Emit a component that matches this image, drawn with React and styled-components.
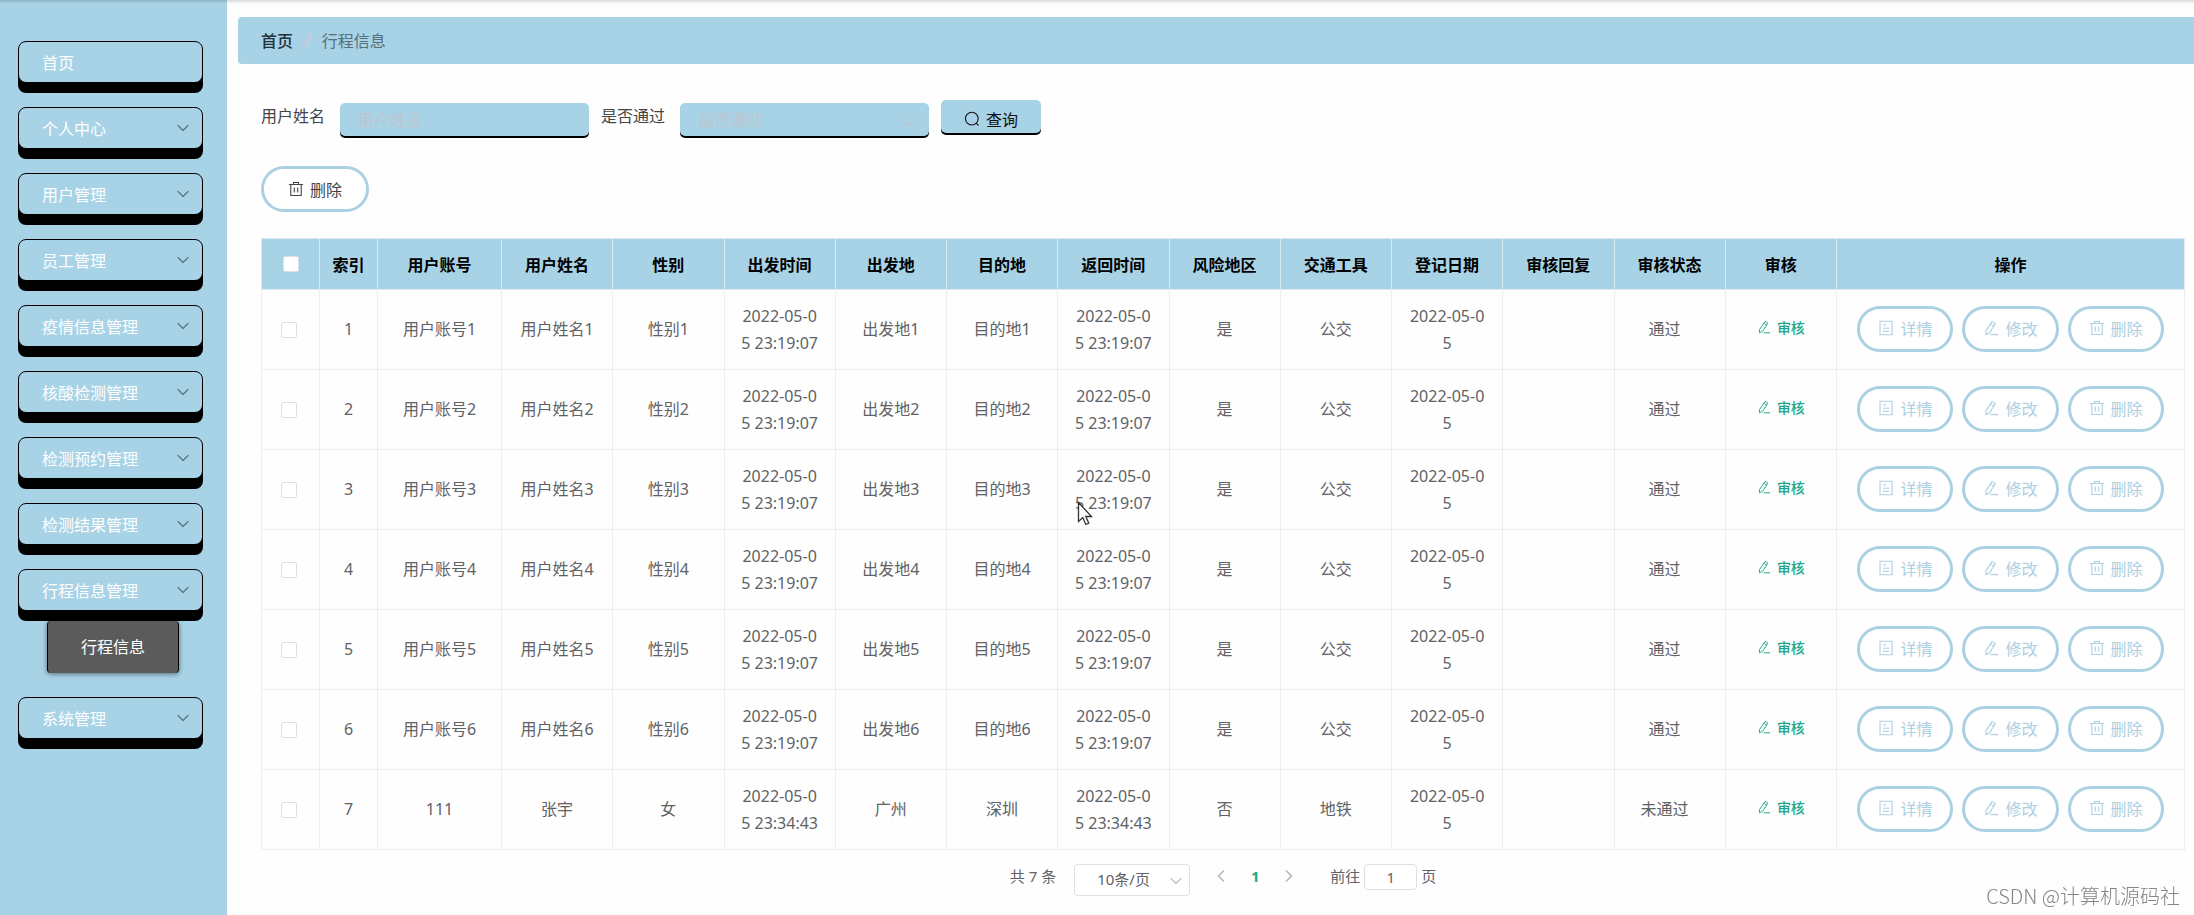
import React, { useState } from "react";
import styled, { createGlobalStyle } from "styled-components";
import { ChevronDown, ChevronLeft, ChevronRight } from "lucide-react";

const blue = "#a8d3e6";
const ring = "#abd0e1";
const line = "#ededf0";

const GlobalStyle = createGlobalStyle`
  * {
    box-sizing: border-box;
  }

  body {
    margin: 0;
    background: #fefefe;
    color: #606266;
    font-family: "Noto Sans", "Noto Sans CJK SC", sans-serif;
    font-size: 16px;
  }

  button,
  input,
  select {
    font-family: inherit;
    font-size: inherit;
  }
`;

const Shell = styled.div`
  display: flex;
  min-height: 100vh;
`;

const TopShade = styled.div`
  position: fixed;
  top: 0;
  left: 0;
  right: 0;
  height: 4px;
  background: linear-gradient(rgba(0, 0, 0, 0.14), rgba(0, 0, 0, 0));
`;

const Sidebar = styled.nav`
  flex: 0 0 227px;
  padding: 41px 24px 24px 18px;
  background: ${blue};
`;

const MenuGroup = styled.div`
  margin-bottom: 24px;
`;

const MenuButton = styled.button`
  display: flex;
  align-items: center;
  justify-content: space-between;
  width: 100%;
  height: 42px;
  padding: 0 9px 0 23px;
  color: #fff;
  background: ${blue};
  border: 1px solid #000;
  border-radius: 8px;
  box-shadow: 0 10px 0 #000;
  cursor: pointer;

  svg {
    color: #55788a;
  }
`;

const SubLink = styled.a`
  display: block;
  margin: 10px 24px 0 29px;
  line-height: 52px;
  text-align: center;
  color: #fff;
  background: #5b5b5b;
  border: solid #000;
  border-width: 0 1px;
  border-radius: 4px;
  box-shadow: 0 1px 5px rgba(0, 0, 0, 0.5);
  text-decoration: none;
`;

const Main = styled.main`
  flex: 1;
  min-width: 0;
  padding: 17px 0 0 11px;
`;

const Breadcrumb = styled.div`
  display: flex;
  align-items: center;
  gap: 11px;
  height: 47px;
  padding: 0 24px 2px 23px;
  background: ${blue};
  border-radius: 4px 0 0 4px;
  color: #56707c;

  a {
    color: #22323a;
    font-weight: 500;
    text-decoration: none;
  }

  i {
    color: #cfc9d2;
    font-weight: 700;
  }
`;

const Content = styled.div`
  padding: 36px 9px 0 23px;
`;

const SearchForm = styled.form`
  display: flex;
  align-items: flex-start;
  gap: 12px;
`;

const Field = styled.div`
  display: flex;
  gap: 15px;

  label {
    line-height: 32px;
    color: #444;
  }
`;

const FieldBox = styled.div`
  position: relative;
  width: 249px;
  margin-top: 3px;

  svg {
    position: absolute;
    right: 10px;
    top: 10px;
    color: #bcc3cb;
    pointer-events: none;
  }
`;

const controlStyle = `
  width: 100%;
  height: 33px;
  padding: 0 18px;
  color: #bfc5cc;
  background: ${blue};
  border: 0;
  border-radius: 5px;
  box-shadow: 0 2px 0 #000;
  outline: none;
  appearance: none;
`;

const TextInput = styled.input`
  ${controlStyle}

  &::placeholder {
    color: #bfc5cc;
  }
`;

const FieldSelect = styled.select`
  ${controlStyle}
`;

const SearchButton = styled.button`
  display: flex;
  align-items: center;
  gap: 6px;
  height: 33px;
  padding: 4px 23px 0;
  color: #111;
  background: ${blue};
  border: 0;
  border-radius: 5px;
  box-shadow: 0 2px 0 #000;
  cursor: pointer;
`;

const PillButton = styled.button`
  display: flex;
  align-items: center;
  gap: 6px;
  height: 46px;
  padding: 0 ${(props) => (props.$wide ? 24 : 18)}px 1px;
  color: ${(props) => (props.$wide ? "#444" : ring)};
  background: #fff;
  border: 3px solid ${ring};
  border-radius: 23px;
  white-space: nowrap;
  cursor: pointer;
`;

const Toolbar = styled.div`
  margin: 30px 0 26px;
`;

const Table = styled.table`
  width: 100%;
  table-layout: fixed;
  border-collapse: collapse;
  text-align: center;
`;

const Th = styled.th`
  height: 51px;
  padding: 0;
  color: #000;
  font-weight: 700;
  background: ${blue};
  border: 1px solid #dcebf2;
`;

const Td = styled.td`
  height: 80px;
  padding: 0 15px;
  line-height: 27px;
  word-break: break-all;
  border: 1px solid ${line};
`;

const CheckTd = styled(Td)`
  padding: 0 4px 0 0;
`;

const StatusTd = styled(Td)`
  padding: 0 20px 0 10px;
`;

const ActionTd = styled(Td)`
  padding: 0 0 2px;
`;

const Checkbox = styled.input`
  display: block;
  width: 16px;
  height: 16px;
  margin: 0 auto;
  background: #fff;
  border: 1px solid #dcdfe6;
  border-radius: 2px;
  appearance: none;

  &:checked {
    background: #1fa588;
  }
`;

const AuditButton = styled.button`
  display: inline-flex;
  align-items: center;
  gap: 6px;
  padding: 0;
  color: #21a68a;
  font-size: 14px;
  font-weight: 500;
  white-space: nowrap;
  background: none;
  border: 0;
  cursor: pointer;
`;

const Actions = styled.div`
  display: flex;
  justify-content: center;
  gap: 9px;
`;

const Pagination = styled.div`
  display: flex;
  justify-content: center;
  align-items: flex-start;
  padding-top: 14px;
  font-size: 15px;
  line-height: 24px;
`;

const SizeBox = styled.div`
  position: relative;
  margin: 0 14px 0 18px;

  select {
    display: block;
    width: 116px;
    height: 32px;
    padding: 0 22px 2px;
    color: #606266;
    background: #fff;
    border: 1px solid #dcdfe6;
    border-radius: 4px;
    appearance: none;
  }

  svg {
    position: absolute;
    right: 4px;
    top: 7px;
    color: #c0c4cc;
    pointer-events: none;
  }
`;

const PageButton = styled.button`
  display: flex;
  align-items: center;
  justify-content: center;
  width: 34px;
  height: 24px;
  padding: 0;
  color: ${(props) => (props.$active ? "#1fa588" : "#b4b7bd")};
  font-weight: 700;
  background: none;
  border: 0;
  cursor: pointer;
`;

const Jumper = styled.label`
  display: flex;
  gap: 4px;
  margin-left: 24px;

  input {
    width: 53px;
    height: 26px;
    padding: 0;
    color: #606266;
    text-align: center;
    background: #fff;
    border: 1px solid #dcdfe6;
    border-radius: 4px;
  }
`;

const Watermark = styled.div`
  position: fixed;
  right: 14px;
  bottom: 5px;
  color: #858585;
  font-family: "Noto Sans CJK SC", sans-serif;
  font-size: 20px;
  font-weight: 300;
`;

const Pointer = styled.svg`
  position: absolute;
  left: 1077px;
  top: 501px;
`;

const Icon = ({ size = 16, children }) => (
  <svg width={size} height={size} viewBox="0 0 16 16" fill="none" stroke="currentColor" strokeWidth="1.1">
    {children}
  </svg>
);

const TrashIcon = () => (
  <Icon>
    <path d="M1 3.5h14M5.5 3.5V1.5h5v2M2.8 3.5v11h10.4v-11M6.3 6.5v5M9.7 6.5v5" />
  </Icon>
);

const DocIcon = () => (
  <Icon>
    <path d="M2 1.2h12v13.6H2zM5 5h3M5 8.2h6M5 11.4h6" />
  </Icon>
);

const EditIcon = ({ size }) => (
  <Icon size={size}>
    <path d="M9.2 1.6l3.3 2-6 9.2-3.7 1.7.2-3.8zM7.8 3.9l3.3 2M7.5 14.6H15" />
  </Icon>
);

const SearchIcon = () => (
  <Icon>
    <circle cx="7.8" cy="7.6" r="6.4" />
    <path d="M12.2 12.2l2.4 2.4" />
  </Icon>
);

const menus = [
  "首页",
  "个人中心",
  "用户管理",
  "员工管理",
  "疫情信息管理",
  "核酸检测管理",
  "检测预约管理",
  "检测结果管理",
  "行程信息管理",
  "系统管理",
];

const columns = [
  "用户账号",
  "用户姓名",
  "性别",
  "出发时间",
  "出发地",
  "目的地",
  "返回时间",
  "风险地区",
  "交通工具",
  "登记日期",
  "审核回复",
  "审核状态",
];

const rows = [1, 2, 3, 4, 5, 6].map((n) => ({
  status: "通过",
  cells: [
    `用户账号${n}`,
    `用户姓名${n}`,
    `性别${n}`,
    "2022-05-05 23:19:07",
    `出发地${n}`,
    `目的地${n}`,
    "2022-05-05 23:19:07",
    "是",
    "公交",
    "2022-05-05",
    "",
  ],
}));

rows.push({
  status: "未通过",
  cells: [
    "111",
    "张宇",
    "女",
    "2022-05-05 23:34:43",
    "广州",
    "深圳",
    "2022-05-05 23:34:43",
    "否",
    "地铁",
    "2022-05-05",
    "",
  ],
});

const App = () => {
  const [name, setName] = useState("");
  const [passed, setPassed] = useState("");
  const [selected, setSelected] = useState([]);
  const [page, setPage] = useState("1");

  const toggleRow = (index) => {
    setSelected(selected.includes(index) ? selected.filter((i) => i !== index) : [...selected, index]);
  };

  const toggleAll = (e) => {
    setSelected(e.target.checked ? rows.map((_, i) => i) : []);
  };

  return (
    <>
      <GlobalStyle />
      <Shell>
        <Sidebar>
          {menus.map((menu) => (
            <MenuGroup key={menu}>
              <MenuButton type="button">
                {menu}
                {menu !== "首页" && <ChevronDown size={20} strokeWidth={1.5} />}
              </MenuButton>
              {menu === "行程信息管理" && <SubLink href="#trips">行程信息</SubLink>}
            </MenuGroup>
          ))}
        </Sidebar>
        <Main>
          <Breadcrumb>
            <a href="#home">首页</a>
            <i>/</i>
            <span>行程信息</span>
          </Breadcrumb>
          <Content>
            <SearchForm onSubmit={(e) => e.preventDefault()}>
              <Field>
                <label htmlFor="name">用户姓名</label>
                <FieldBox>
                  <TextInput id="name" placeholder="用户姓名" value={name} onChange={(e) => setName(e.target.value)} />
                </FieldBox>
              </Field>
              <Field>
                <label htmlFor="passed">是否通过</label>
                <FieldBox>
                  <FieldSelect id="passed" value={passed} onChange={(e) => setPassed(e.target.value)}>
                    <option value="">是否通过</option>
                    <option value="yes">通过</option>
                    <option value="no">未通过</option>
                  </FieldSelect>
                  <ChevronDown size={20} strokeWidth={1.5} />
                </FieldBox>
              </Field>
              <SearchButton type="submit">
                <SearchIcon />
                查询
              </SearchButton>
            </SearchForm>
            <Toolbar>
              <PillButton type="button" $wide>
                <TrashIcon />
                删除
              </PillButton>
            </Toolbar>
            <Table>
              <colgroup>
                <col width="58" />
                <col width="58" />
                <col width="124" />
                <col span="12" />
                <col width="348" />
              </colgroup>
              <thead>
                <tr>
                  <Th>
                    <Checkbox
                      type="checkbox"
                      aria-label="全选"
                      checked={selected.length === rows.length}
                      onChange={toggleAll}
                    />
                  </Th>
                  <Th>索引</Th>
                  {columns.map((column) => (
                    <Th key={column}>{column}</Th>
                  ))}
                  <Th>审核</Th>
                  <Th>操作</Th>
                </tr>
              </thead>
              <tbody>
                {rows.map((row, index) => (
                  <tr key={index}>
                    <CheckTd>
                      <Checkbox
                        type="checkbox"
                        aria-label={`选择${index + 1}`}
                        checked={selected.includes(index)}
                        onChange={() => toggleRow(index)}
                      />
                    </CheckTd>
                    <Td>{index + 1}</Td>
                    {row.cells.map((cell, i) => (
                      <Td key={i}>{cell}</Td>
                    ))}
                    <StatusTd>{row.status}</StatusTd>
                    <ActionTd>
                      <AuditButton type="button">
                        <EditIcon size={14} />
                        审核
                      </AuditButton>
                    </ActionTd>
                    <ActionTd>
                      <Actions>
                        <PillButton type="button">
                          <DocIcon />
                          详情
                        </PillButton>
                        <PillButton type="button">
                          <EditIcon />
                          修改
                        </PillButton>
                        <PillButton type="button">
                          <TrashIcon />
                          删除
                        </PillButton>
                      </Actions>
                    </ActionTd>
                  </tr>
                ))}
              </tbody>
            </Table>
            <Pagination>
              <span>共 7 条</span>
              <SizeBox>
                <select aria-label="每页条数" defaultValue="10">
                  <option value="10">10条/页</option>
                  <option value="20">20条/页</option>
                </select>
                <ChevronDown size={20} strokeWidth={1.5} />
              </SizeBox>
              <PageButton type="button" aria-label="上一页">
                <ChevronLeft size={20} />
              </PageButton>
              <PageButton type="button" $active>
                1
              </PageButton>
              <PageButton type="button" aria-label="下一页">
                <ChevronRight size={20} />
              </PageButton>
              <Jumper>
                前往
                <input value={page} onChange={(e) => setPage(e.target.value)} />
                页
              </Jumper>
            </Pagination>
          </Content>
        </Main>
      </Shell>
      <TopShade />
      <Watermark>CSDN @计算机源码社</Watermark>
      <Pointer width="16" height="26" viewBox="0 0 16 26" fill="#fff" stroke="#333" strokeWidth="1.3">
        <path d="M1.5 1.5v19l4.3-4 3 7 3-1.3-3-6.7h5.7z" />
      </Pointer>
    </>
  );
};

export default App;
